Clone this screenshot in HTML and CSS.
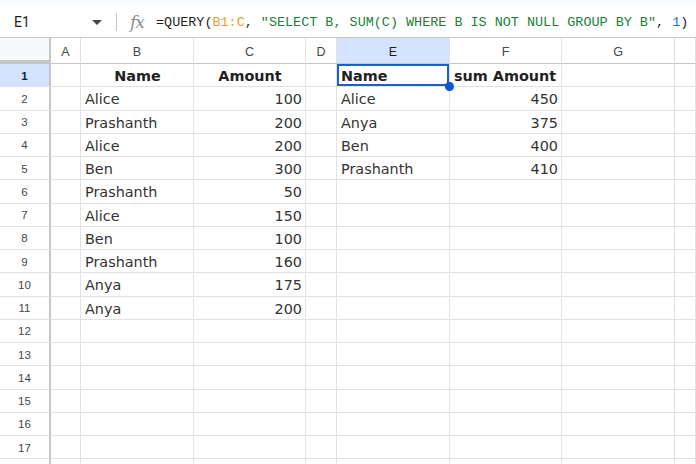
FILE: index.html
```html
<!DOCTYPE html>
<html>
<head>
<meta charset="utf-8">
<link rel="stylesheet" href="styles.css">
</head>
<body>
<div class="app">
  <div class="topband"></div>
  <div class="fbar">
    <div class="namebox">E1</div>
    <svg class="caret" width="10" height="6" viewBox="0 0 10 6"><path d="M0 0 L10 0 L5 5 Z" fill="#444746"/></svg>
    <div class="sep"></div>
    <div class="fx">fx</div>
    <div class="formula">=QUERY(<span class="ref">B1:C</span>, <span class="str">"SELECT B, SUM(C) WHERE B IS NOT NULL GROUP BY B"</span>, <span class="num">1</span>)</div>
  </div>
  <div class="grid">
    <div class="corner"></div>
    <div class="ch">A</div><div class="ch">B</div><div class="ch">C</div><div class="ch">D</div><div class="ch sel">E</div><div class="ch">F</div><div class="ch">G</div><div class="ch"></div>

    <div class="rh sel">1</div><div class="c"></div><div class="c b ctr">Name</div><div class="c b ctr">Amount</div><div class="c"></div><div class="c b active">Name<span class="handle"></span></div><div class="c b">sum Amount</div><div class="c"></div><div class="c"></div>

    <div class="rh">2</div><div class="c"></div><div class="c">Alice</div><div class="c r">100</div><div class="c"></div><div class="c">Alice</div><div class="c r">450</div><div class="c"></div><div class="c"></div>
    <div class="rh">3</div><div class="c"></div><div class="c">Prashanth</div><div class="c r">200</div><div class="c"></div><div class="c">Anya</div><div class="c r">375</div><div class="c"></div><div class="c"></div>
    <div class="rh">4</div><div class="c"></div><div class="c">Alice</div><div class="c r">200</div><div class="c"></div><div class="c">Ben</div><div class="c r">400</div><div class="c"></div><div class="c"></div>
    <div class="rh">5</div><div class="c"></div><div class="c">Ben</div><div class="c r">300</div><div class="c"></div><div class="c">Prashanth</div><div class="c r">410</div><div class="c"></div><div class="c"></div>
    <div class="rh">6</div><div class="c"></div><div class="c">Prashanth</div><div class="c r">50</div><div class="c"></div><div class="c"></div><div class="c"></div><div class="c"></div><div class="c"></div>
    <div class="rh">7</div><div class="c"></div><div class="c">Alice</div><div class="c r">150</div><div class="c"></div><div class="c"></div><div class="c"></div><div class="c"></div><div class="c"></div>
    <div class="rh">8</div><div class="c"></div><div class="c">Ben</div><div class="c r">100</div><div class="c"></div><div class="c"></div><div class="c"></div><div class="c"></div><div class="c"></div>
    <div class="rh">9</div><div class="c"></div><div class="c">Prashanth</div><div class="c r">160</div><div class="c"></div><div class="c"></div><div class="c"></div><div class="c"></div><div class="c"></div>
    <div class="rh">10</div><div class="c"></div><div class="c">Anya</div><div class="c r">175</div><div class="c"></div><div class="c"></div><div class="c"></div><div class="c"></div><div class="c"></div>
    <div class="rh">11</div><div class="c"></div><div class="c">Anya</div><div class="c r">200</div><div class="c"></div><div class="c"></div><div class="c"></div><div class="c"></div><div class="c"></div>
    <div class="rh">12</div><div class="c"></div><div class="c"></div><div class="c"></div><div class="c"></div><div class="c"></div><div class="c"></div><div class="c"></div><div class="c"></div>
    <div class="rh">13</div><div class="c"></div><div class="c"></div><div class="c"></div><div class="c"></div><div class="c"></div><div class="c"></div><div class="c"></div><div class="c"></div>
    <div class="rh">14</div><div class="c"></div><div class="c"></div><div class="c"></div><div class="c"></div><div class="c"></div><div class="c"></div><div class="c"></div><div class="c"></div>
    <div class="rh">15</div><div class="c"></div><div class="c"></div><div class="c"></div><div class="c"></div><div class="c"></div><div class="c"></div><div class="c"></div><div class="c"></div>
    <div class="rh">16</div><div class="c"></div><div class="c"></div><div class="c"></div><div class="c"></div><div class="c"></div><div class="c"></div><div class="c"></div><div class="c"></div>
    <div class="rh">17</div><div class="c"></div><div class="c"></div><div class="c"></div><div class="c"></div><div class="c"></div><div class="c"></div><div class="c"></div><div class="c"></div>
    <div class="rh"></div><div class="c"></div><div class="c"></div><div class="c"></div><div class="c"></div><div class="c"></div><div class="c"></div><div class="c"></div><div class="c"></div>
  </div>
</div>
</body>
</html>
```

FILE: styles.css
```css
* { box-sizing: border-box; }
html, body { margin: 0; padding: 0; }
body {
  width: 696px;
  height: 464px;
  overflow: hidden;
  background: #fff;
  font-family: "DejaVu Sans", Verdana, sans-serif;
}
.app { width: 696px; height: 464px; overflow: hidden; }
.topband { height: 7px; background: #f9fbfd; }
.fbar {
  height: 31px;
  display: flex;
  align-items: center;
  background: #fff;
  border-bottom: 1px solid #c4c7c5;
}
.namebox {
  width: 83px;
  padding-left: 14px;
  font-family: Roboto, "Liberation Sans", sans-serif;
  font-size: 14px;
  color: #1f1f1f;
}
.caret { margin-left: 9px; margin-top: 1px; }
.sep {
  width: 1px;
  height: 18px;
  background: #c7c7c7;
  margin-left: 14px;
}
.fx {
  margin-left: 13px;
  width: 26px;
  font-family: "DejaVu Serif", "Liberation Serif", serif;
  font-style: italic;
  font-size: 17px;
  color: #8a8d91;
  letter-spacing: -1px;
}
.formula {
  font-family: "Liberation Mono", monospace;
  font-size: 13.45px;
  color: #1f1f1f;
  white-space: pre;
  padding-top: 1px;
}
.ref { color: #f29b2c; }
.str { color: #188038; }
.num { color: #1a73e8; }

.grid {
  display: grid;
  grid-template-columns: 51px 30px 113px 112px 31px 113px 112px 113px 1fr;
  grid-template-rows: 26px repeat(18, 23.25px);
}
.corner {
  background: #f8f9fa;
  border-right: 2px solid #c4c7c5;
  border-bottom: 4px solid #c4c7c5;
}
.ch {
  display: flex;
  align-items: center;
  justify-content: center;
  font-family: "Liberation Sans", Arial, sans-serif;
  font-size: 12.5px;
  color: #444746;
  background: #fff;
  border-right: 1px solid #e1e1e1;
  border-bottom: 1px solid #c4c7c5;
  padding-top: 2px;
}
.ch.sel { background: #d3e3fd; color: #1f1f1f; }
.rh {
  display: flex;
  align-items: center;
  justify-content: center;
  font-family: "Liberation Sans", Arial, sans-serif;
  font-size: 11.5px;
  color: #444746;
  background: #fff;
  border-right: 2px solid #c4c7c5;
  border-bottom: 1px solid #e1e1e1;
  padding-top: 1px;
}
.rh.sel { background: #d3e3fd; color: #0b1f44; font-weight: bold; }
.c {
  position: relative;
  display: flex;
  align-items: center;
  padding: 2px 3px 0 4px;
  font-size: 14.4px;
  color: #333333;
  white-space: nowrap;
  border-right: 1px solid #e1e1e1;
  border-bottom: 1px solid #e1e1e1;
}
.c.r { justify-content: flex-end; }
.c.ctr { justify-content: center; }
.c.b { font-weight: bold; color: #1f1f1f; }
.c.active {
  box-shadow: inset 0 0 0 2px #1a5fd0;
  padding-left: 4px;
}
.handle {
  position: absolute;
  right: -5px;
  bottom: -5px;
  width: 9px;
  height: 9px;
  border-radius: 50%;
  background: #0b57d0;
  z-index: 2;
}
```
